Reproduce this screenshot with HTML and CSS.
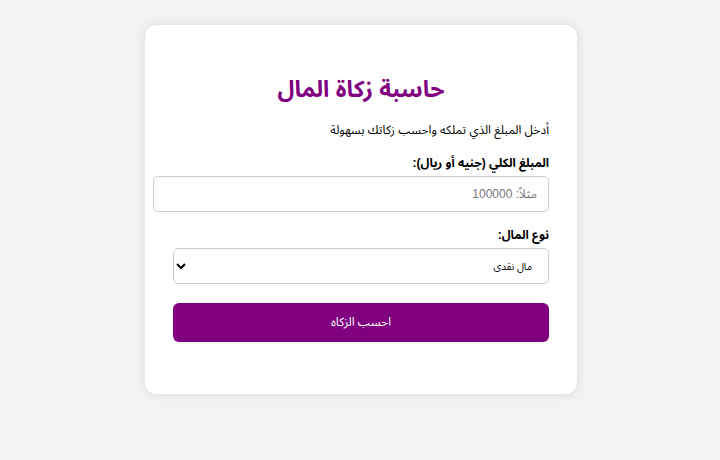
FILE: index.html
```html
<!DOCTYPE html>
<html lang="ar" dir="rtl">
<head>
<meta charset="utf-8">
<title>حاسبة زكاة المال</title>
<link rel="stylesheet" href="styles.css">
</head>
<body>
<div class="card">
  <h2 class="title">حاسبة زكاة المال</h2>
  <p class="intro">أدخل المبلغ الذي تملكه واحسب زكاتك بسهولة</p>
  <form class="form">
    <label class="label" for="amount">المبلغ الكلي (جنيه أو ريال):</label>
    <input class="input" id="amount" type="number" placeholder="مثلاً: 100000">
    <label class="label label-gap" for="type">نوع المال:</label>
    <select class="select" id="type">
      <option>مال نقدي</option>
      <option>ذهب</option>
      <option>فضة</option>
    </select>
    <button class="btn" type="button">احسب الزكاه</button>
  </form>
</div>
</body>
</html>
```
FILE: styles.css
```css
html, body {
  margin: 0;
  padding: 0;
}
body {
  background: #f2f2f2;
  font-family: "Liberation Sans", "Noto Sans Arabic", Arial, sans-serif;
  padding: 25px 0 0 2px;
  height: 460px;
  box-sizing: border-box;
}
.card {
  width: 376px;
  margin: 0 auto;
  padding: 28px;
  background: #fff;
  border-radius: 12px;
  box-shadow: 0 0 10px rgba(0, 0, 0, 0.1);
}
.title {
  margin: 18px 0 0;
  line-height: 36px;
  font-size: 23px;
  font-weight: bold;
  text-align: center;
  color: #800080;
}
.intro {
  margin: 15px 0 0;
  font-size: 12px;
  line-height: 16px;
  color: #000;
}
.form {
  display: flex;
  flex-direction: column;
  align-items: stretch;
  margin-top: 17px;
}
.label {
  display: block;
  font-weight: bold;
  font-size: 12px;
  line-height: 16px;
  margin-bottom: 5px;
}
.label-gap {
  margin-top: 15px;
}
.input {
  width: 374px;
  height: 14px;
  padding: 10px 11px 10px 9px;
  border: 1px solid #ccc;
  border-radius: 5px;
  font-family: inherit;
  font-size: 12px;
  line-height: 14px;
  box-sizing: content-box;
  align-self: flex-start;
}
.input::placeholder {
  color: #767676;
}
.select {
  width: 100%;
  height: 36px;
  padding: 0 12px 0 8px;
  border: 1px solid #ccc;
  border-radius: 5px;
  background: #fff;
  font-family: inherit;
  font-size: 10px;
  color: #000;
  box-sizing: border-box;
}
.btn {
  margin: 19px 0 24px;
  height: 39px;
  width: 100%;
  border: none;
  border-radius: 6px;
  background: #800080;
  color: #fff;
  font-family: inherit;
  font-size: 12px;
}
```
